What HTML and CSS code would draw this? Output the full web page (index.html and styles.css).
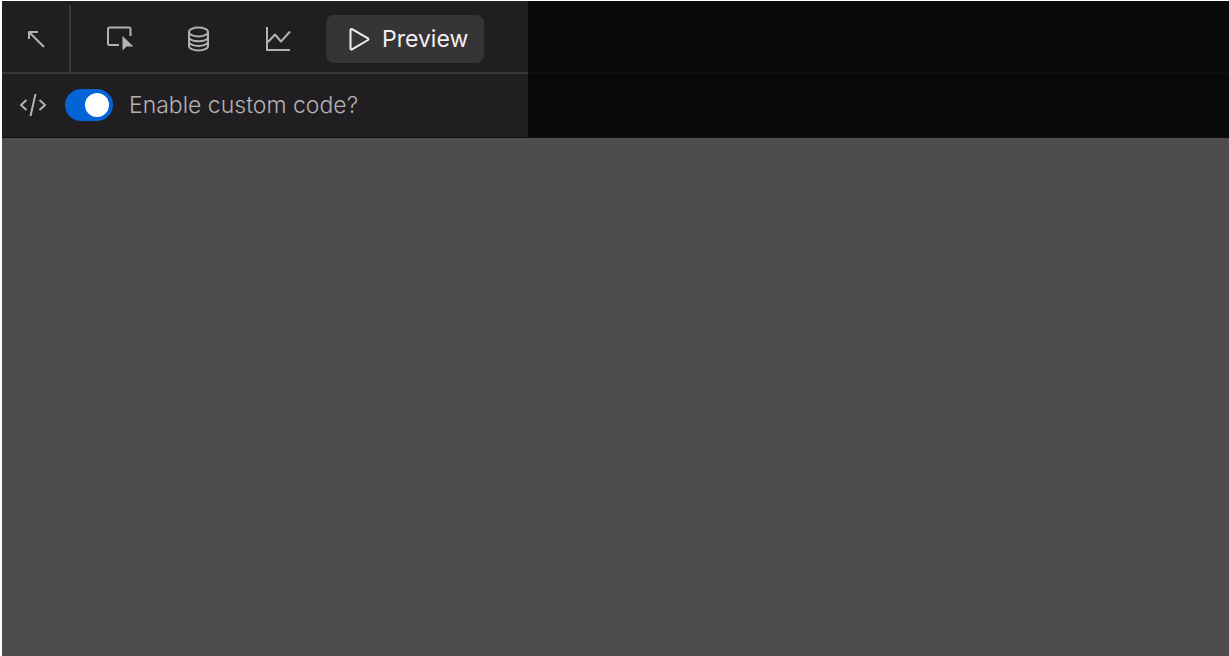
FILE: index.html
```html
<!DOCTYPE html>
<html lang="en">
<head>
<meta charset="utf-8">
<title>Designer</title>
<link rel="stylesheet" href="styles.css">
</head>
<body>
<div class="app">
  <header class="header">
    <div class="panel">
      <nav class="toolbar" aria-label="Main tools">
        <button class="back" type="button" aria-label="Back">
          <svg class="icon" viewBox="0 0 28 28"><path d="M22 22 7 7M7 14V7H16"/></svg>
        </button>
        <div class="tools">
          <button class="tool" type="button" aria-label="Select">
            <svg class="icon" viewBox="0 0 28 28"><path d="M14 20H4.500a1.500 1.500 0 0 1-1.500-1.500V4a1.500 1.500 0 0 1 1.500-1.500H24a1.500 1.500 0 0 1 1.500 1.500V11"/><path class="solid" d="M17.500 11v14.500l4-4h7z"/></svg>
          </button>
          <button class="tool" type="button" aria-label="Data">
            <svg class="icon" viewBox="0 0 28 28"><ellipse cx="13.500" cy="7" rx="9.500" ry="4.500"/><path d="M4 7v14c0 2.500 4.200 4.500 9.500 4.500s9.500-2 9.500-4.500V7M4 12c0 2.500 4.200 4.300 9.500 4.300s9.500-1.800 9.500-4.300M4 16.500c0 2.500 4.200 4.500 9.500 4.500s9.500-2 9.500-4.500"/></svg>
          </button>
          <button class="tool" type="button" aria-label="Analytics">
            <svg class="icon" viewBox="0 0 28 28"><path d="M2 2v23H25M3 17l7-7.500 6 7L25 6.500"/></svg>
          </button>
        </div>
        <button class="preview" type="button">
          <svg class="icon" viewBox="0 0 28 28"><path d="M4.500 5v18.500a1 1 0 0 0 1.500.8l16-9.300a1 1 0 0 0 0-1.600L6 4.200a1 1 0 0 0-1.500.8z"/></svg>
          Preview
        </button>
      </nav>
      <div class="options">
        <svg class="icon" viewBox="0 0 28 28" aria-hidden="true"><path d="M7.500 9 2 14l5.500 5M20.500 9 26 14l-5.500 5M16.500 3l-5 22"/></svg>
        <input class="switch" id="custom-code" type="checkbox" role="switch" checked>
        <label for="custom-code">Enable custom code?</label>
      </div>
    </div>
    <div class="shade">
      <div class="shade-top"></div>
    </div>
  </header>
  <main class="canvas"></main>
</div>
</body>
</html>
```
FILE: styles.css
```css
* {
  box-sizing: border-box;
}

body {
  margin: 0;
  background: #fff;
  color: #b3b1b4;
  font-family: Inter, "Liberation Sans", sans-serif;
  font-size: 23px;
  font-weight: 300;
  line-height: 28px;
}

.app {
  display: flex;
  flex-direction: column;
  min-height: 100vh;
  padding: 1px 0 0 2px;
}

.header {
  display: flex;
  border-bottom: 1px solid #0e0c0f;
  background: #09080a;
}

.panel {
  flex: 0 0 526px;
  background: #201e21;
}

.toolbar {
  display: flex;
  align-items: center;
  height: 73px;
  padding-top: 4px;
  border-bottom: 2px solid #3a383b;
}

button {
  padding: 0;
  border: 0;
  background: none;
  color: inherit;
  font: inherit;
}

.icon {
  display: block;
  flex: none;
  width: 28px;
  height: 28px;
  fill: none;
  stroke: currentColor;
  stroke-width: 2;
  stroke-linejoin: round;
}

.solid {
  fill: currentColor;
  stroke: none;
}

.back {
  display: flex;
  align-items: center;
  align-self: stretch;
  justify-content: center;
  width: 69px;
  border-right: 2px solid #3a383b;
}

.tools {
  display: flex;
  gap: 52px;
  padding: 0 33px 0 34px;
}

.preview {
  display: flex;
  align-items: center;
  gap: 8px;
  padding: 10px 16px 10px 20px;
  border-radius: 8px;
  background: #363437;
  color: #f1eff2;
  font-weight: 400;
}

.options {
  display: flex;
  align-items: center;
  height: 63px;
  padding: 0 0 2px 17px;
}

.switch {
  display: flex;
  align-items: center;
  justify-content: flex-end;
  width: 48px;
  height: 32px;
  margin: 0 16px 0 18px;
  padding: 4px;
  border-radius: 16px;
  background: #0264d5;
  appearance: none;
}

.switch::before {
  width: 24px;
  height: 24px;
  border-radius: 50%;
  background: #fff;
  content: "";
}

.switch:not(:checked) {
  justify-content: flex-start;
  background: #5a585b;
}

.shade {
  flex: 1;
}

.shade-top {
  height: 73px;
  border-bottom: 2px solid #0f0e10;
}

.canvas {
  flex: 1;
  background: #4e4c4f;
}
```
